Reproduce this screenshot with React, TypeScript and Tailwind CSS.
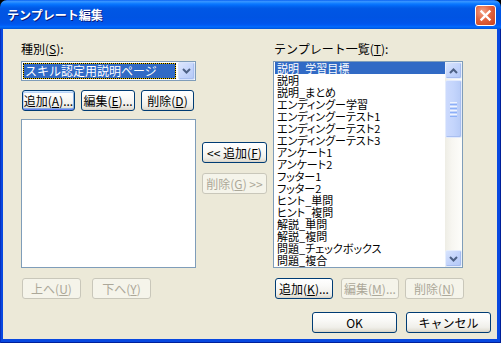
import React from "react";

function U({ c }: { c: string }) {
  return <span className="underline underline-offset-[1px] decoration-1">{c}</span>;
}

type BtnProps = {
  children: React.ReactNode;
  className?: string;
  disabled?: boolean;
  def?: boolean;
};

function Btn({ children, className = "", disabled, def }: BtnProps) {
  const base =
    "h-[21px] shrink-0 flex items-center justify-center rounded-[3px] text-[12px] leading-none whitespace-nowrap";
  const look = disabled
    ? "border border-[#C9C7BA] bg-[#F5F4EA] text-[#ACA899]"
    : "border border-[#003C74] bg-[linear-gradient(180deg,#FFFFFF_0%,#FAFAF8_35%,#F0EFEA_75%,#E3E0D6_92%,#D6D0C5_100%)] text-black";
  const d = def
    ? "shadow-[inset_0_1px_0_#CEE7FF,inset_0_-1px_0_#6982EE,inset_1px_0_0_#B9D1FB,inset_-1px_0_0_#8DB2E3,inset_0_2px_0_#BCD4F6,inset_0_-2px_0_#89ADE4]"
    : "";
  return <div className={`${base} ${look} ${d} ${className}`}>{children}</div>;
}

function Chevron({ up }: { up?: boolean }) {
  return (
    <svg width="9" height="6" viewBox="0 0 9 6">
      <path
        d={up ? "M1 5 L4.5 1.5 L8 5" : "M1 1 L4.5 4.5 L8 1"}
        stroke="#4D6185"
        strokeWidth="2"
        fill="none"
      />
    </svg>
  );
}

function ScrollBtn({ up }: { up?: boolean }) {
  return (
    <div className="h-[17px] w-[17px] shrink-0 rounded-[2px] border border-[#E6EEFC] bg-[linear-gradient(135deg,#D8E4FD_0%,#C3D4FB_50%,#B2C7F6_100%)] shadow-[inset_-1px_-1px_0_#A6BCEF] flex items-center justify-center">
      <Chevron up={up} />
    </div>
  );
}

const items = [
  "説明_学習目標",
  "説明",
  "説明_まとめ",
  "エンディングー学習",
  "エンディングーテスト1",
  "エンディングーテスト2",
  "エンディングーテスト3",
  "アンケート1",
  "アンケート2",
  "フッター1",
  "フッター2",
  "ヒント_単問",
  "ヒント_複問",
  "解説_単問",
  "解説_複問",
  "問題_チェックボックス",
  "問題_複合",
  "問題_ラジオボタン",
];

export default function App() {
  return (
    <div className="w-[501px] h-[343px] bg-black flex flex-col overflow-hidden [font-family:'Noto_Sans_CJK_JP',sans-serif] text-black">
      {/* Title bar */}
      <div className="h-[29px] shrink-0 rounded-t-[7px] bg-[linear-gradient(180deg,#0058EE_0%,#3A93FF_4%,#288EFF_8%,#127DFF_12%,#036FFC_17%,#0262EE_23%,#0057E5_30%,#0054E3_60%,#0055EB_80%,#005BF5_87%,#026AFE_92%,#0062EF_96%,#0052D6_100%)] flex items-start justify-between pl-[7px] pr-[5px]">
        <div className="pt-[8px] text-[12px] leading-[14px] font-bold text-white [text-shadow:1px_1px_0_#0A1A7A]">
          テンプレート編集
        </div>
        <div className="mt-[5px] w-[21px] h-[21px] rounded-[3px] border border-white bg-[radial-gradient(circle_at_35%_30%,#F4A488_0%,#E2643F_45%,#C8401B_100%)] flex items-center justify-center">
          <svg width="13" height="13" viewBox="0 0 13 13">
            <path d="M2.5 2.5 L10.5 10.5 M10.5 2.5 L2.5 10.5" stroke="#FFFFFF" strokeWidth="2.4" strokeLinecap="square" />
          </svg>
        </div>
      </div>

      {/* Frame + body */}
      <div className="flex-1 flex flex-col bg-[#0848E0] pl-[3px] pr-[4px] pb-[4px] shadow-[inset_1px_0_0_#0831C0,inset_-1px_0_0_#00209A,inset_0_-1px_0_#00209A]">
        <div className="flex-1 flex flex-col bg-[#ECE9D8] text-[12px]">
          {/* top section */}
          <div className="flex pl-[18px] pt-[13px]">
            {/* left column */}
            <div className="w-[175px] flex flex-col">
              <div className="h-[14px] leading-[14px]">
                種別(<U c="S" />):
              </div>
              <div className="mt-[5px] h-[20px] border border-[#7F9DB9] bg-white flex items-center pl-[1px] gap-[2px]">
                <div className="w-[153px] h-[16px] bg-[#F0C800]">
                  <div className="w-full h-full border border-dotted border-black bg-[#316AC5] bg-clip-padding text-white leading-[14px] pl-[1px] whitespace-nowrap overflow-hidden">
                    スキル認定用説明ページ
                  </div>
                </div>
                <div className="w-[17px] h-[18px] rounded-[2px] border border-[#D9E4FB] bg-[linear-gradient(135deg,#DCE6FD_0%,#C6D6FB_50%,#B4C8F6_100%)] shadow-[inset_-1px_-1px_0_#A9BFF0] flex items-center justify-center">
                  <Chevron />
                </div>
              </div>
              <div className="mt-[9px] flex gap-[6px] ml-[1px]">
                <Btn def className="w-[53px]">
                  追加(<U c="A" />)...
                </Btn>
                <Btn className="w-[54px]">
                  編集(<U c="E" />)...
                </Btn>
                <Btn className="w-[53px]">
                  削除(<U c="D" />)
                </Btn>
              </div>
              <div className="mt-[8px] h-[149px] border border-[#7F9DB9] bg-white" />
              <div className="mt-[10px] flex gap-[11px] ml-[1px]">
                <Btn disabled className="w-[59px]">
                  上へ(<U c="U" />)
                </Btn>
                <Btn disabled className="w-[59px]">
                  下へ(<U c="Y" />)
                </Btn>
              </div>
            </div>

            {/* middle column */}
            <div className="ml-[6px] w-[65px] flex flex-col pt-[100px] gap-[10px]">
              <Btn className="w-[65px]">
                &lt;&lt; 追加(<U c="F" />)
              </Btn>
              <Btn disabled className="w-[65px]">
                削除(<U c="G" />) &gt;&gt;
              </Btn>
            </div>

            {/* right column */}
            <div className="ml-[6px] w-[191px] flex flex-col">
              <div className="h-[14px] leading-[14px] pl-[1px]">
                テンプレート一覧(<U c="T" />):
              </div>
              <div className="mt-[5px] w-[190px] h-[207px] border border-[#7F9DB9] bg-white flex">
                <div className="flex-1 pl-[1px] overflow-hidden">
                  {items.map((t, i) => (
                    <div
                      key={t}
                      className={`h-[12px] leading-[12px] text-[11px] pl-[2px] whitespace-nowrap [font-feature-settings:'palt'] ${
                        i === 0 ? "bg-[#316AC5] text-white" : "text-black"
                      }`}
                    >
                      {t}
                    </div>
                  ))}
                </div>
                <div className="w-[17px] flex flex-col bg-[linear-gradient(90deg,#EEEDE5_0%,#F7F6F1_40%,#FDFDFA_100%)]">
                  <ScrollBtn up />
                  <div className="mt-[1px] h-[58px] rounded-[2px] border border-[#E3EBFC] bg-[linear-gradient(90deg,#CCDAFD_0%,#C4D5FC_50%,#B7CBF7_100%)] shadow-[inset_-1px_-1px_0_#A9BFF0] flex flex-col items-center justify-center gap-[1px]">
                    <div className="w-[7px] h-[1px] bg-[#EEF4FE]" />
                    <div className="w-[7px] h-[1px] bg-[#8CB0F8]" />
                    <div className="w-[7px] h-[1px] bg-[#EEF4FE]" />
                    <div className="w-[7px] h-[1px] bg-[#8CB0F8]" />
                    <div className="w-[7px] h-[1px] bg-[#EEF4FE]" />
                    <div className="w-[7px] h-[1px] bg-[#8CB0F8]" />
                    <div className="w-[7px] h-[1px] bg-[#EEF4FE]" />
                    <div className="w-[7px] h-[1px] bg-[#8CB0F8]" />
                  </div>
                  <div className="flex-1" />
                  <ScrollBtn />
                </div>
              </div>
              <div className="mt-[10px] flex ml-[2px]">
                <Btn className="w-[58px]">
                  追加(<U c="K" />)...
                </Btn>
                <Btn disabled className="w-[58px] ml-[8px]">
                  編集(<U c="M" />)...
                </Btn>
                <Btn disabled className="w-[59px] ml-[6px]">
                  削除(<U c="N" />)
                </Btn>
              </div>
            </div>
          </div>

          {/* OK / Cancel */}
          <div className="mt-[13px] flex justify-end gap-[9px] pr-[6px]">
            <Btn className="w-[85px]">OK</Btn>
            <Btn className="w-[85px]">キャンセル</Btn>
          </div>
        </div>
      </div>
    </div>
  );
}
